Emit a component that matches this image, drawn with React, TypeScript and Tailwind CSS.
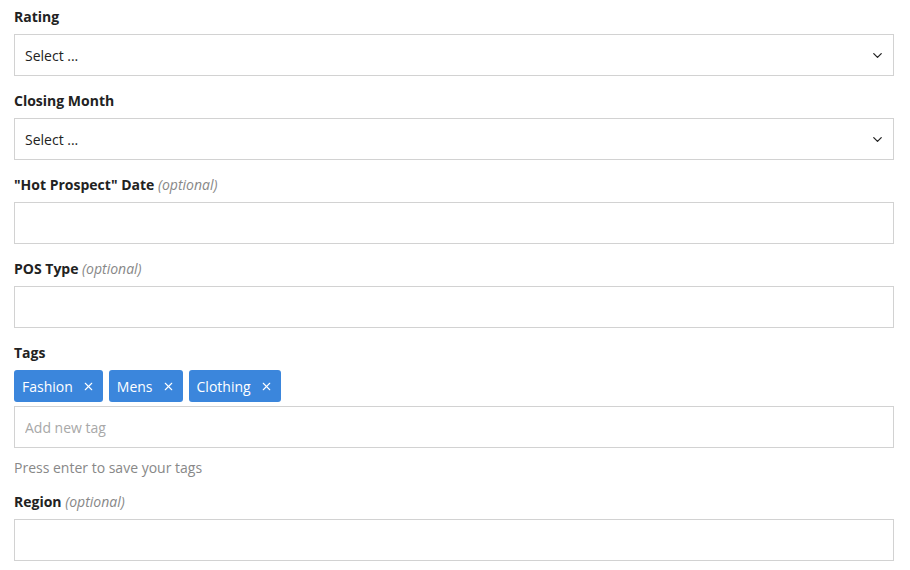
import { ChevronDown, X } from 'lucide-react';

const TAGS = ['Fashion', 'Mens', 'Clothing'];

function Label({ text, optional }: { text: string; optional?: boolean }) {
  return (
    <label className="block text-[14px] leading-5 font-bold text-[#222] mb-[7px]">
      {text}
      {optional && <span className="font-normal italic text-[#888]"> (optional)</span>}
    </label>
  );
}

function SelectBox() {
  return (
    <div className="flex items-center justify-between h-[42px] border border-[#d2d2d2] bg-white pl-[10px] pr-[8px] pt-[1px] text-[14px] text-[#222]">
      <span>Select ...</span>
      <ChevronDown className="w-[15px] h-[15px] text-[#222]" strokeWidth={2} />
    </div>
  );
}

function TextBox({ placeholder }: { placeholder?: string }) {
  return (
    <input
      placeholder={placeholder}
      className="block w-full h-[42px] border border-[#d2d2d2] bg-white px-[10px] text-[14px] text-[#222] placeholder:text-[#a8a8a8] outline-none"
    />
  );
}

export default function App() {
  return (
    <div className="bg-white w-[910px] h-[570px] px-[14px] pt-[7px] pr-[16px] font-['Open_Sans',sans-serif]">
      <div className="mb-[15px]">
        <Label text="Rating" />
        <SelectBox />
      </div>
      <div className="mb-[15px]">
        <Label text="Closing Month" />
        <SelectBox />
      </div>
      <div className="mb-[15px]">
        <Label text={'"Hot Prospect" Date'} optional />
        <TextBox />
      </div>
      <div className="mb-[15px]">
        <Label text="POS Type" optional />
        <TextBox />
      </div>
      <div className="mb-[14px]">
        <Label text="Tags" />
        <div className="flex gap-[6px] mb-[4px]">
          {TAGS.map((t) => (
            <span
              key={t}
              className="flex items-center h-[32px] rounded-[3px] bg-[#3b86dc] pl-[8px] pr-[8px] text-[14px] text-white"
            >
              {t}
              <X className="w-[13px] h-[13px] ml-[9px]" strokeWidth={2} />
            </span>
          ))}
        </div>
        <TextBox placeholder="Add new tag" />
        <p className="mt-[10px] text-[14px] leading-5 text-[#888]">Press enter to save your tags</p>
      </div>
      <div>
        <Label text="Region" optional />
        <TextBox />
      </div>
    </div>
  );
}
